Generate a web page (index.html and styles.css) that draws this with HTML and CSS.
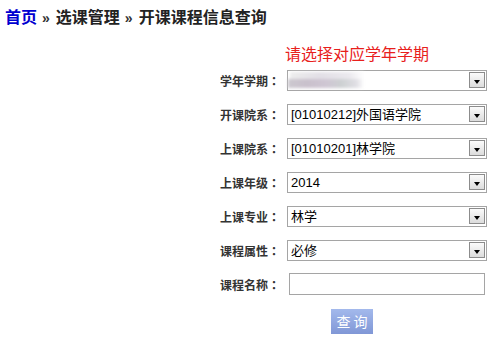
FILE: index.html
```html
<html>
  <head>
    <title>开课课程信息查询</title>
    <link rel="stylesheet" href="styles.css">
  </head>
  <body>
    <div class="crumb"><a href="#" class="home">首页</a><span class="sep">»</span>选课管理<span class="sep">»</span>开课课程信息查询</div>
    <div class="note">请选择对应学年学期</div>
    <form class="query" onsubmit="return false;">
      <label>学年学期<span class="colon">：</span></label>
      <div class="sel">
        <select><option value=""></option></select>
        <span class="blur"><i class="b1"></i><i class="b2"></i></span>
        <span class="arrow"></span>
      </div>
      <label>开课院系<span class="colon">：</span></label>
      <div class="sel">
        <select><option>[01010212]外国语学院</option></select>
        <span class="arrow"></span>
      </div>
      <label>上课院系<span class="colon">：</span></label>
      <div class="sel">
        <select><option>[01010201]林学院</option></select>
        <span class="arrow"></span>
      </div>
      <label>上课年级<span class="colon">：</span></label>
      <div class="sel">
        <select><option>2014</option></select>
        <span class="arrow"></span>
      </div>
      <label>上课专业<span class="colon">：</span></label>
      <div class="sel">
        <select><option>林学</option></select>
        <span class="arrow"></span>
      </div>
      <label>课程属性<span class="colon">：</span></label>
      <div class="sel">
        <select><option>必修</option></select>
        <span class="arrow"></span>
      </div>
      <label>课程名称<span class="colon">：</span></label>
      <div><input class="name" type="text"/></div>
      <span></span>
      <div><button class="btn" type="submit">查 询</button></div>
    </form>
  </body>
</html>
```

FILE: styles.css
```css
body {
  margin: 0;
  font-family: "Liberation Sans", "Noto Sans CJK SC", sans-serif;
  color: #222;
}
.crumb {
  padding: 8px 5px 0;
  font-size: 16px;
  font-weight: bold;
  line-height: 20px;
  color: #222;
}
.home {
  color: #0000d0;
  text-decoration: none;
}
.sep {
  margin: 0 6px 0 5px;
  font-size: 14px;
  color: #333;
}
.note {
  margin: 19px 0 0 285px;
  font-size: 16px;
  line-height: 16px;
  color: #e8201c;
}
.query {
  margin: 0;
  display: grid;
  grid-template-columns: 280px 1fr;
  grid-auto-rows: 34px;
  align-items: center;
}
.query label {
  text-align: right;
  font-size: 12px;
  font-weight: bold;
  color: #333;
}
.colon {
  font-family: "Noto Sans CJK TC", sans-serif;
}
.sel {
  position: relative;
  box-sizing: border-box;
  width: 200px;
  height: 21px;
  margin-left: 7px;
  border: 1px solid #a5a5a5;
  background: #fff;
}
.sel select {
  -webkit-appearance: none;
  appearance: none;
  display: block;
  width: 100%;
  height: 100%;
  margin: 0;
  padding: 0 0 0 3px;
  border: none;
  outline: none;
  background: transparent;
  font-family: "Liberation Sans", "Noto Sans CJK SC", sans-serif;
  font-size: 13px;
  color: #000;
}
.arrow {
  position: absolute;
  top: 1px;
  right: 1px;
  box-sizing: border-box;
  width: 16px;
  height: 16px;
  border: 1px solid #8c8c8c;
  background: linear-gradient(#fbfbfb, #dcdcdc);
}
.arrow::after {
  content: "";
  position: absolute;
  left: 4px;
  top: 7px;
  border-top: 4px solid #000;
  border-left: 3px solid transparent;
  border-right: 3px solid transparent;
}
.blur {
  position: absolute;
  left: 0;
  top: 1px;
  width: 76px;
  height: 16px;
  filter: blur(1.5px);
}
.blur i {
  display: block;
}
.b1 {
  height: 7px;
  margin-left: 2px;
  background: linear-gradient(90deg, #ededed, #e2dfe6 40%, #ebe9ee 80%, #fff);
}
.b2 {
  height: 9px;
  background: linear-gradient(90deg, #ccc8cf, #c9c0cc 25%, #cfc6d3 50%, #cdd0d2 70%, #e0dfe4 90%, #fff);
}
.name {
  box-sizing: border-box;
  width: 196px;
  height: 22px;
  margin-left: 9px;
  border: 1px solid #a5a5a5;
  outline: none;
  font-size: 13px;
}
.btn {
  margin: 6px 0 0 51px;
  width: 42px;
  height: 25px;
  padding: 0;
  border: none;
  background: linear-gradient(#a3b9ec, #8097d6);
  color: #fff;
  font-family: "Noto Sans CJK SC", sans-serif;
  font-size: 14px;
}
```
